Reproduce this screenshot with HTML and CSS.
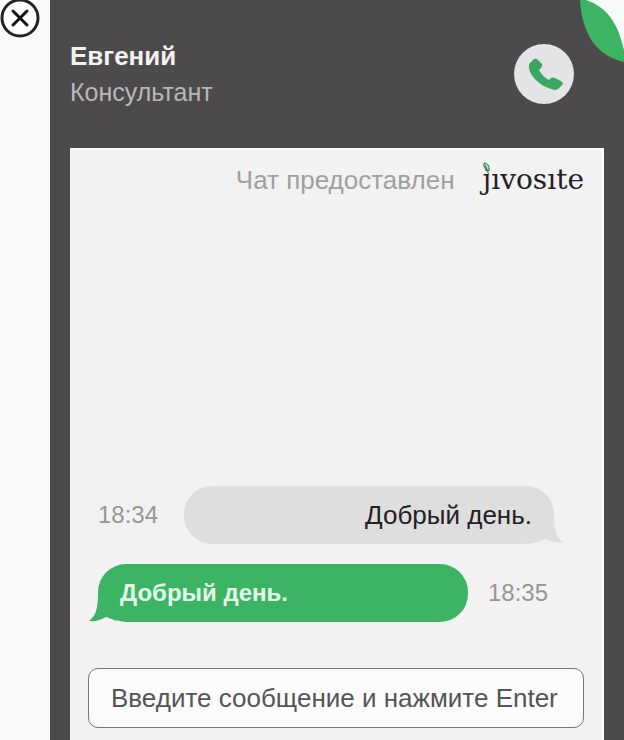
FILE: index.html
```html
<!DOCTYPE html>
<html lang="ru">
<head>
    <meta charset="UTF-8">
    <meta name="viewport" content="width=device-width, initial-scale=1.0">
    <title>Чат с консультантом</title>
    <link rel="stylesheet" href="styles.css">
</head>
<body>
    <aside class="side">
        <button class="close-btn" type="button" aria-label="Закрыть">
            <svg viewBox="0 0 40 40" width="40" height="40">
                <circle cx="20" cy="18" r="18" fill="#fff" stroke="#242424" stroke-width="3"/>
                <path d="M13 11l14 14M27 11L13 25" stroke="#111" stroke-width="3" stroke-linecap="round"/>
            </svg>
        </button>
    </aside>

    <main class="chat">
        <header class="header">
            <div class="agent">
                <h1>Евгений</h1>
                <p>Консультант</p>
            </div>
            <button class="call-btn" type="button" aria-label="Позвонить">
                <svg viewBox="0 0 60 60" width="60" height="60">
                    <path d="M15 20L20 15Q22 14 24 16L28 20Q29 22 27 24L25 26Q28 32 35 36L37 34Q39 33 41 34L47 37Q50 39 48 41L44 45Q42 47 37 45Q27 42 20 34Q14 27 15 20Z" fill="#3aa765"/>
                </svg>
            </button>
            <svg class="corner" viewBox="0 0 44 62" width="44" height="62" aria-hidden="true">
                <path d="M0 0H44V62C18 56 2 36 0 0Z" fill="#3db464"/>
                <path d="M6 0H44V50C38 23 27 7 6 0Z" fill="#f7faf7"/>
            </svg>
        </header>

        <section class="panel">
            <div class="provider">
                <span>Чат предоставлен</span>
                <a class="logo" href="#">jıvosıte<svg class="leaf" viewBox="0 0 8 14" width="8" height="14" aria-hidden="true">
                    <path d="M1 1Q7 1 6 9Q0 7 1 1Z" fill="#a9dfbc" stroke="#2c7d4b"/>
                    <path d="M2 3L6 13" fill="none" stroke="#2c7d4b"/>
                </svg></a>
            </div>

            <div class="messages">
                <div class="message visitor">
                    <time>18:34</time>
                    <p class="bubble">Добрый день.
                        <svg class="tail" viewBox="0 0 28 30" width="28" height="30" aria-hidden="true">
                            <path d="M0 0H19C19 14 20 23 28 28Q19 30 11 25L0 29Z"/>
                        </svg>
                    </p>
                </div>
                <div class="message agent-message">
                    <p class="bubble">Добрый день.
                        <svg class="tail" viewBox="0 0 28 30" width="28" height="30" aria-hidden="true">
                            <path d="M28 0H9C9 14 8 23 0 29Q9 30 17 25L28 29Z"/>
                        </svg>
                    </p>
                    <time>18:35</time>
                </div>
            </div>

            <form class="message-form">
                <input type="text" placeholder="Введите сообщение и нажмите Enter" aria-label="Сообщение">
            </form>
        </section>
    </main>
</body>
</html>
```

FILE: styles.css
```css
* {
    box-sizing: border-box;
}
body {
    display: flex;
    min-height: 100vh;
    margin: 0;
    font-family: "Liberation Sans", Arial, sans-serif;
    font-size: 26px;
    background-color: #fafafa;
}
h1, p {
    margin: 0;
}
button {
    padding: 0;
    border: none;
    background: none;
    cursor: pointer;
}
svg {
    display: block;
}
.side {
    flex: 0 0 50px;
}
.chat {
    position: relative;
    flex: 1;
    display: flex;
    flex-direction: column;
    padding: 0 20px;
    background-color: #4c4a4a;
}
.header {
    display: flex;
    justify-content: space-between;
    align-items: center;
    height: 148px;
    padding-right: 30px;
}
.agent h1 {
    font-size: 26px;
    line-height: 36px;
    color: #f2f2f2;
}
.agent p {
    font-size: 25px;
    line-height: 36px;
    color: #b8b8b8;
}
.call-btn {
    border-radius: 50%;
    background-color: #e4e4e6;
}
.corner {
    position: absolute;
    top: 0;
    right: 0;
}
.panel {
    flex: 1;
    display: flex;
    flex-direction: column;
    padding: 12px 18px;
    background-color: #f3f2f3;
    border: solid #fcfcfc;
    border-width: 2px 2px 0 0;
}
.provider {
    display: flex;
    justify-content: flex-end;
    align-items: center;
    gap: 28px;
    line-height: 36px;
    color: #a0a0a0;
}
.logo {
    position: relative;
    font-family: "DejaVu Serif", serif;
    font-size: 28px;
    color: #222;
    text-decoration: none;
}
.leaf {
    position: absolute;
    top: 0;
    left: 0;
}
.messages {
    flex: 1;
    display: flex;
    flex-direction: column;
    justify-content: flex-end;
    gap: 20px;
    padding: 0 30px 46px 10px;
}
.message {
    display: flex;
    align-items: center;
    gap: 20px;
}
.message time {
    font-size: 24px;
    color: #969696;
}
.bubble {
    position: relative;
    flex: 0 0 370px;
    padding: 0 22px;
    border-radius: 28px;
    line-height: 58px;
}
.visitor {
    justify-content: space-between;
}
.visitor .bubble {
    background-color: #dedede;
    color: #222;
    text-align: right;
}
.agent-message .bubble {
    background-color: #3db464;
    color: #e4fbea;
    font-size: 24px;
    font-weight: bold;
}
.tail {
    position: absolute;
    bottom: 0;
}
.visitor .tail {
    right: -9px;
    fill: #dedede;
}
.agent-message .tail {
    left: -9px;
    fill: #3db464;
}
.message-form input {
    width: 100%;
    height: 60px;
    padding: 0 22px;
    border: 1px solid #777;
    border-radius: 10px;
    background-color: #fcfcfc;
    font: inherit;
}
.message-form input::placeholder {
    color: #555;
    opacity: 1;
}
```
